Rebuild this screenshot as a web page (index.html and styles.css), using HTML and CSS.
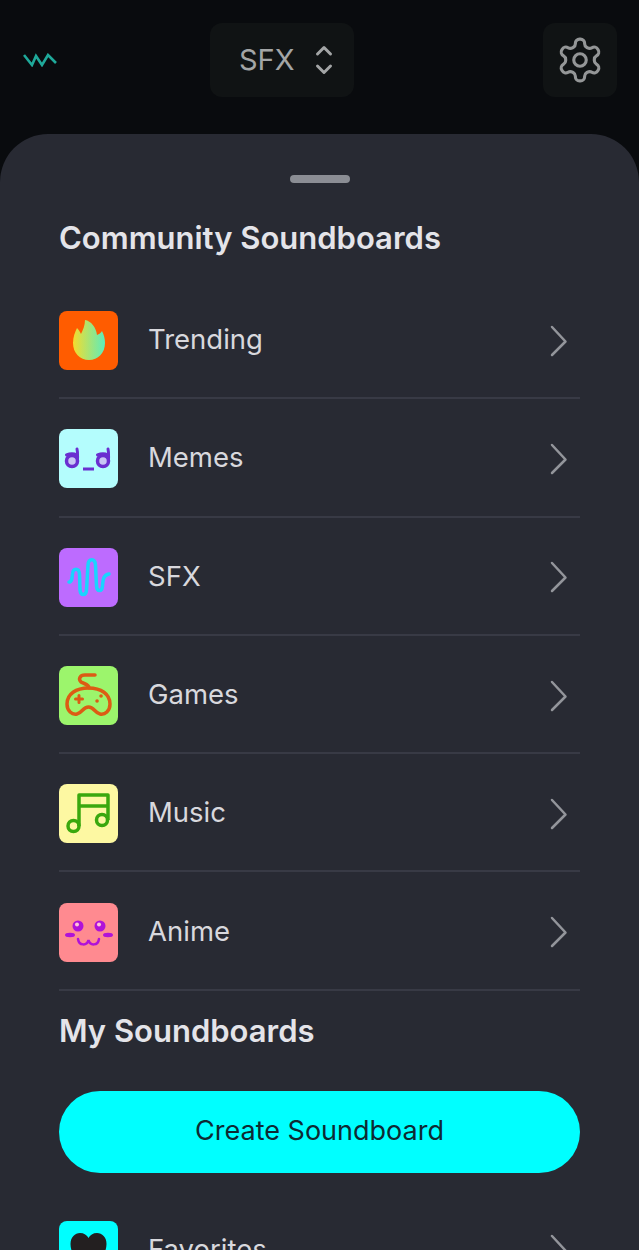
FILE: index.html
```html
<!DOCTYPE html>
<html lang="en">

<head>
    <meta charset="UTF-8">
    <meta name="viewport" content="width=device-width, initial-scale=1.0">
    <title>Soundboards</title>

    <link rel="stylesheet" href="styles.css">
</head>

<body>
    <header class="top-bar">
        <svg class="logo" viewBox="0 0 34 14" width="34" height="14">
            <polyline points="1,2 9,12 13,3 19,12 25,2 33,10" />
        </svg>

        <div class="picker">
            <span>SFX</span>
            <svg viewBox="0 0 18 30" width="18" height="30">
                <path d="M2.5 9 9 2.5 15.500 9M2.500 21 9 27.500 15.500 21" />
            </svg>
        </div>

        <div class="settings">
            <svg viewBox="0 0 24 24" width="50" height="50">
                <path d="M12.22 2h-.44a2 2 0 0 0-2 2v.18a2 2 0 0 1-1 1.73l-.43.25a2 2 0 0 1-2 0l-.15-.08a2 2 0 0 0-2.73.73l-.22.38a2 2 0 0 0 .73 2.73l.15.1a2 2 0 0 1 1 1.72v.51a2 2 0 0 1-1 1.74l-.15.09a2 2 0 0 0-.73 2.73l.22.38a2 2 0 0 0 2.73.73l.15-.08a2 2 0 0 1 2 0l.43.25a2 2 0 0 1 1 1.73V20a2 2 0 0 0 2 2h.44a2 2 0 0 0 2-2v-.18a2 2 0 0 1 1-1.73l.43-.25a2 2 0 0 1 2 0l.15.08a2 2 0 0 0 2.73-.73l.22-.39a2 2 0 0 0-.73-2.73l-.15-.08a2 2 0 0 1-1-1.74v-.5a2 2 0 0 1 1-1.74l.15-.09a2 2 0 0 0 .73-2.73l-.22-.38a2 2 0 0 0-2.73-.73l-.15.08a2 2 0 0 1-2 0l-.43-.25a2 2 0 0 1-1-1.73V4a2 2 0 0 0-2-2z" />
                <circle cx="12" cy="12" r="3" />
            </svg>
        </div>
    </header>

    <main class="sheet">
        <div class="handle"></div>

        <h2 class="section-title">Community Soundboards</h2>

        <ul class="board-list">
            <li class="board">
                <svg class="board-icon trending" viewBox="0 0 59 59">
                    <defs>
                        <linearGradient id="flame">
                            <stop offset="0" stop-color="#f5dc2c" />
                            <stop offset="1" stop-color="#5cecbc" />
                        </linearGradient>
                    </defs>
                    <path fill="url(#flame)" d="M26 9C32 10 37 16 38 24 40 23 42 22 43 20 45 24 46 28 46 32 46 42 39 49 30 49 21 49 14 42 14 32 14 26 16 21 18 17 20 19 21 21 22 23 24 19 26 14 26 9Z" />
                </svg>
                <span class="board-name">Trending</span>
                <svg class="chevron" viewBox="0 0 18 32" width="18" height="32"><path d="M2 2 15.500 16.500 2 30" /></svg>
            </li>
            <li class="board">
                <svg class="board-icon memes" viewBox="0 0 59 59">
                    <g fill="#c9c6f5" stroke="#6a2fd0" stroke-width="3.500" stroke-linecap="round">
                        <circle cx="13" cy="32" r="5.500" />
                        <circle cx="44" cy="32" r="5.500" />
                    </g>
                    <g fill="none" stroke="#6a2fd0" stroke-width="3" stroke-linecap="round">
                        <path d="M18.500 31C18.500 27 19 24 18 20M7.500 26C11 24.500 15 24.500 18 26" />
                        <path d="M49.500 31C49.500 27 50 24 49 20M38.500 26C42 24.500 46 24.500 49 26" />
                        <path d="M24 40H35" stroke-linecap="butt" />
                    </g>
                </svg>
                <span class="board-name">Memes</span>
                <svg class="chevron" viewBox="0 0 18 32" width="18" height="32"><path d="M2 2 15.500 16.500 2 30" /></svg>
            </li>
            <li class="board">
                <svg class="board-icon sfx" viewBox="0 0 59 59">
                    <path fill="none" stroke="#19d4ff" stroke-width="3.500" stroke-linecap="round" d="M10 34C13 34 13 30 13.500 26 14 19.500 20 19.500 20.500 26L21 42C21.500 48 27 48 27.500 42L29 17C29.500 10 36 10 36.500 17L37.500 38C38 44 43 44 43.500 38 44 30 45 27 50 26" />
                </svg>
                <span class="board-name">SFX</span>
                <svg class="chevron" viewBox="0 0 18 32" width="18" height="32"><path d="M2 2 15.500 16.500 2 30" /></svg>
            </li>
            <li class="board">
                <svg class="board-icon games" viewBox="0 0 59 59">
                    <g fill="none" stroke="#dc5c14" stroke-width="3.500" stroke-linecap="round">
                        <path d="M36 9H26C21 9 19 13 22 16 25 18 30 18 30 22" />
                        <path d="M8 38C8 28 17 22 29.500 22 42 22 51 28 51 38 51 45 46 49 41 48 36 47 35 41 29.500 41 24 41 23 47 18 48 13 49 8 45 8 38Z" />
                        <path d="M16.500 33H23.500M20 29.500V36.500" stroke-width="3" />
                        <path d="M42 30H42.100M38 35H38.100" />
                    </g>
                </svg>
                <span class="board-name">Games</span>
                <svg class="chevron" viewBox="0 0 18 32" width="18" height="32"><path d="M2 2 15.500 16.500 2 30" /></svg>
            </li>
            <li class="board">
                <svg class="board-icon music" viewBox="0 0 59 59">
                    <g fill="none" stroke="#3aa80e" stroke-width="3.500" stroke-linejoin="round">
                        <circle cx="14.500" cy="42" r="5.500" />
                        <circle cx="43" cy="36" r="5.500" />
                        <path d="M20 42V11H49V36M20 22H49" />
                    </g>
                </svg>
                <span class="board-name">Music</span>
                <svg class="chevron" viewBox="0 0 18 32" width="18" height="32"><path d="M2 2 15.500 16.500 2 30" /></svg>
            </li>
            <li class="board">
                <svg class="board-icon anime" viewBox="0 0 59 59">
                    <circle cx="19" cy="23" r="5.500" fill="#b012d8" />
                    <circle cx="41" cy="23" r="5.500" fill="#b012d8" />
                    <circle cx="18" cy="21.500" r="2" fill="#ffc4d8" />
                    <circle cx="40" cy="21.500" r="2" fill="#ffc4d8" />
                    <ellipse cx="11" cy="32" rx="5" ry="2.200" fill="#b012d8" />
                    <ellipse cx="49" cy="32" rx="5" ry="2.200" fill="#b012d8" />
                    <path fill="none" stroke="#b012d8" stroke-width="2.500" stroke-linecap="round" d="M19 36C20 43 28 43 29.500 37 31 43 39 43 40 36" />
                </svg>
                <span class="board-name">Anime</span>
                <svg class="chevron" viewBox="0 0 18 32" width="18" height="32"><path d="M2 2 15.500 16.500 2 30" /></svg>
            </li>
        </ul>

        <h2 class="section-title my-boards">My Soundboards</h2>

        <button class="create-btn">Create Soundboard</button>

        <div class="board favorites">
            <svg class="board-icon fav" viewBox="0 0 59 59">
                <path fill="#231f20" d="M29.500 48C20 41 11.500 34 11.500 23 11.500 16 16 12 21 12 25 12 28 14 29.500 17 31 14 34 12 38 12 43 12 47.500 16 47.500 23 47.500 34 39 41 29.500 48Z" />
            </svg>
            <span class="board-name">Favorites</span>
            <svg class="chevron" viewBox="0 0 18 32" width="18" height="32"><path d="M2 2 15.500 16.500 2 30" /></svg>
        </div>
    </main>
</body>

</html>
```

FILE: styles.css
```css
* {
    box-sizing: border-box;
}

html,
body {
    height: 1250px;
    overflow: hidden;
}

body {
    margin: 0;
    background-color: #090b0e;
    font-family: Inter, "Liberation Sans", sans-serif;
}

.top-bar {
    display: flex;
    align-items: center;
    height: 134px;
    padding: 0 22px 15px 23px;
}

.logo {
    flex: none;
    fill: none;
    stroke: #1fa99a;
    stroke-width: 2.6;
}

.picker {
    display: flex;
    align-items: center;
    justify-content: space-between;
    width: 144px;
    height: 74px;
    margin-left: 153px;
    padding: 0 21px 0 29px;
    background-color: #101314;
    border-radius: 12px;
    color: #a3a5a6;
    font-size: 29px;
}

.picker svg {
    fill: none;
    stroke: #a3a5a6;
    stroke-width: 3;
    stroke-linecap: round;
    stroke-linejoin: round;
}

.settings {
    display: flex;
    align-items: center;
    justify-content: center;
    width: 74px;
    height: 74px;
    margin-left: auto;
    background-color: #101314;
    border-radius: 12px;
}

.settings svg {
    fill: none;
    stroke: #949697;
    stroke-width: 1.500;
}

.sheet {
    height: 1116px;
    padding: 0 59px;
    background-color: #282a33;
    border-radius: 48px 48px 0 0;
    overflow: hidden;
}

.handle {
    width: 60px;
    height: 8px;
    margin: 41px auto 0;
    background-color: #8b8d94;
    border-radius: 4px;
}

.section-title {
    margin: 36px 0 0;
    color: #e4e4e9;
    font-size: 31px;
    font-weight: 600;
    line-height: 38px;
}

.board-list {
    margin: 24px 0 0;
    padding: 0;
    list-style: none;
}

.board {
    display: flex;
    align-items: center;
    height: 118.300px;
    padding: 3px 12px 0 0;
    border-bottom: 2px solid #383a45;
}

.board-icon {
    flex: none;
    width: 59px;
    height: 59px;
    border-radius: 8px;
}

.trending { background-color: #ff5c00; }
.memes { background-color: #b4fdfd; }
.sfx { background-color: #bd6bff; }
.games { background-color: #9cf56c; }
.music { background-color: #fdf8a2; }
.anime { background-color: #ff8a90; }
.fav { background-color: #00ffff; }

.board-name {
    margin: 0 0 3px 30px;
    color: #d8d8dd;
    font-size: 27.500px;
}

.chevron {
    flex: none;
    margin-left: auto;
    fill: none;
    stroke: #93959b;
    stroke-width: 2.500;
    stroke-linecap: round;
    stroke-linejoin: round;
}

.section-title.my-boards {
    margin-top: 21px;
}

.create-btn {
    display: block;
    width: 521px;
    height: 82px;
    margin-top: 41px;
    padding: 0 0 3px;
    background-color: #00ffff;
    border: none;
    border-radius: 41px;
    color: #0e2a33;
    font-family: inherit;
    font-size: 27px;
}

.board.favorites {
    height: auto;
    margin-top: 48px;
    padding-top: 0;
    border-bottom: none;
}
```
